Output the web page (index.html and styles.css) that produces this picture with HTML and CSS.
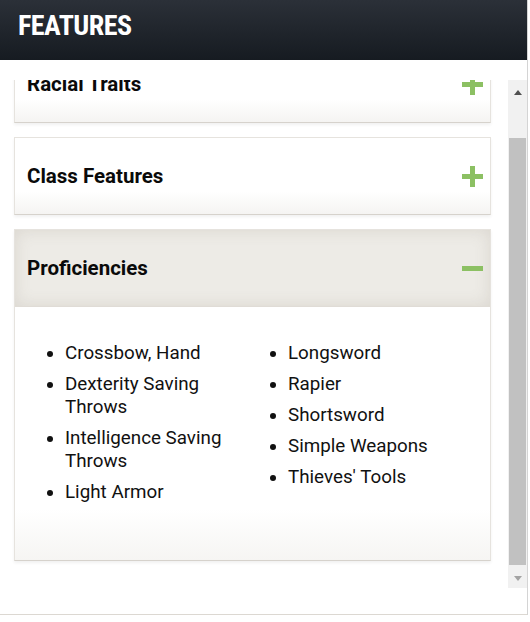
FILE: index.html
```html
<!DOCTYPE html>
<html lang="en">
<head>
    <meta charset="UTF-8">
    <meta name="viewport" content="width=device-width, initial-scale=1.0">
    <title>Features</title>
    <link rel="stylesheet" href="styles.css">
</head>
<body>
    <div class="pane">
        <div class="pane-head"><h2>FEATURES</h2></div>

        <div class="scroll-area">
            <div class="viewport" id="viewport">
                <div class="stack">
                    <div class="card">
                        <div class="card-head">
                            <h3>Racial Traits</h3>
                            <span class="toggle plus"></span>
                        </div>
                    </div>

                    <div class="card">
                        <div class="card-head">
                            <h3>Class Features</h3>
                            <span class="toggle plus"></span>
                        </div>
                    </div>

                    <div class="card open">
                        <div class="card-head">
                            <h3>Proficiencies</h3>
                            <span class="toggle minus"></span>
                        </div>
                        <div class="card-body">
                            <ul>
                                <li>Crossbow, Hand</li>
                                <li>Dexterity Saving Throws</li>
                                <li>Intelligence Saving Throws</li>
                                <li>Light Armor</li>
                            </ul>
                            <ul>
                                <li>Longsword</li>
                                <li>Rapier</li>
                                <li>Shortsword</li>
                                <li>Simple Weapons</li>
                                <li>Thieves' Tools</li>
                            </ul>
                        </div>
                    </div>
                </div>
            </div>

            <div class="scrollbar">
                <div class="sb-btn"><span class="arrow up"></span></div>
                <div class="sb-track"><div class="sb-thumb"></div></div>
                <div class="sb-btn"><span class="arrow down"></span></div>
            </div>
        </div>

        <div class="pane-foot"></div>
    </div>

    <script>
        document.getElementById("viewport").scrollTop = 49;
    </script>
</body>
</html>
```

FILE: styles.css
```css
body { margin: 0; background: #fff; font-family: Roboto, "Liberation Sans", sans-serif; }

.pane { width: 527px; border-right: 1px solid #d4d4d4; }

.pane-head { height: 60px; background: linear-gradient(#2b3038, #161b21); margin-bottom: 20px; }
.pane-head h2 { margin: 0; padding: 9px 0 0 18px; color: #fff; font-size: 28px; font-weight: 700; font-stretch: 75%; letter-spacing: -0.5px; }

.scroll-area { display: flex; height: 508px; }
.viewport { flex: 1; overflow: hidden; padding: 0 17px 0 14px; }
.stack { padding: 14px 0 36px; }

.scrollbar { width: 19px; display: flex; flex-direction: column; background: #f1f1f1; }
.sb-btn { height: 17px; display: flex; align-items: center; justify-content: center; }
.sb-track { flex: 1; padding-top: 41px; }
.sb-thumb { height: 427px; margin: 0 1px; background: #c1c1c1; }
.arrow { width: 0; height: 0; border-style: solid; border-color: transparent; }
.arrow.up { border-width: 0 4px 5px; border-bottom-color: #505050; margin-top: 7px; }
.arrow.down { border-width: 5px 4px 0; border-top-color: #a3a3a3; margin-top: -2px; }

.card { background: linear-gradient(#fff 70%, #f5f4f2); border: 1px solid #e6e3de; border-bottom-color: #d6d2cc; box-shadow: 0 2px 3px rgba(0, 0, 0, 0.06); margin-bottom: 14px; }
.card.open { margin-bottom: 0; }

.card-head { height: 76px; display: flex; align-items: center; justify-content: space-between; padding: 0 7px 0 12px; }
.card-head h3 { margin: 0; font-size: 20.5px; font-weight: 700; color: #0a0a0a; }
.open .card-head { background: #edebe6; box-shadow: inset 0 0 16px rgba(120, 105, 85, 0.16); border-bottom: 1px solid #e0dcd6; }

.toggle { position: relative; width: 21px; height: 21px; }
.toggle::before, .toggle::after { content: ""; position: absolute; background: #8cc063; }
.toggle::before { left: 0; right: 0; top: 8px; height: 5px; }
.plus::after { top: 0; bottom: 0; left: 8px; width: 5px; }

.card-body { display: grid; grid-template-columns: 1fr 1fr; padding: 19px 19px 32px 10px; background: linear-gradient(#fff 80%, #f6f5f3); }
.card-body ul { margin: 16px 0; padding-left: 40px; }
.card-body li { font-size: 18.8px; line-height: 23px; color: #111; margin-bottom: 8px; }

.pane-foot { height: 26px; border-bottom: 1px solid #dcd8d2; }
```
